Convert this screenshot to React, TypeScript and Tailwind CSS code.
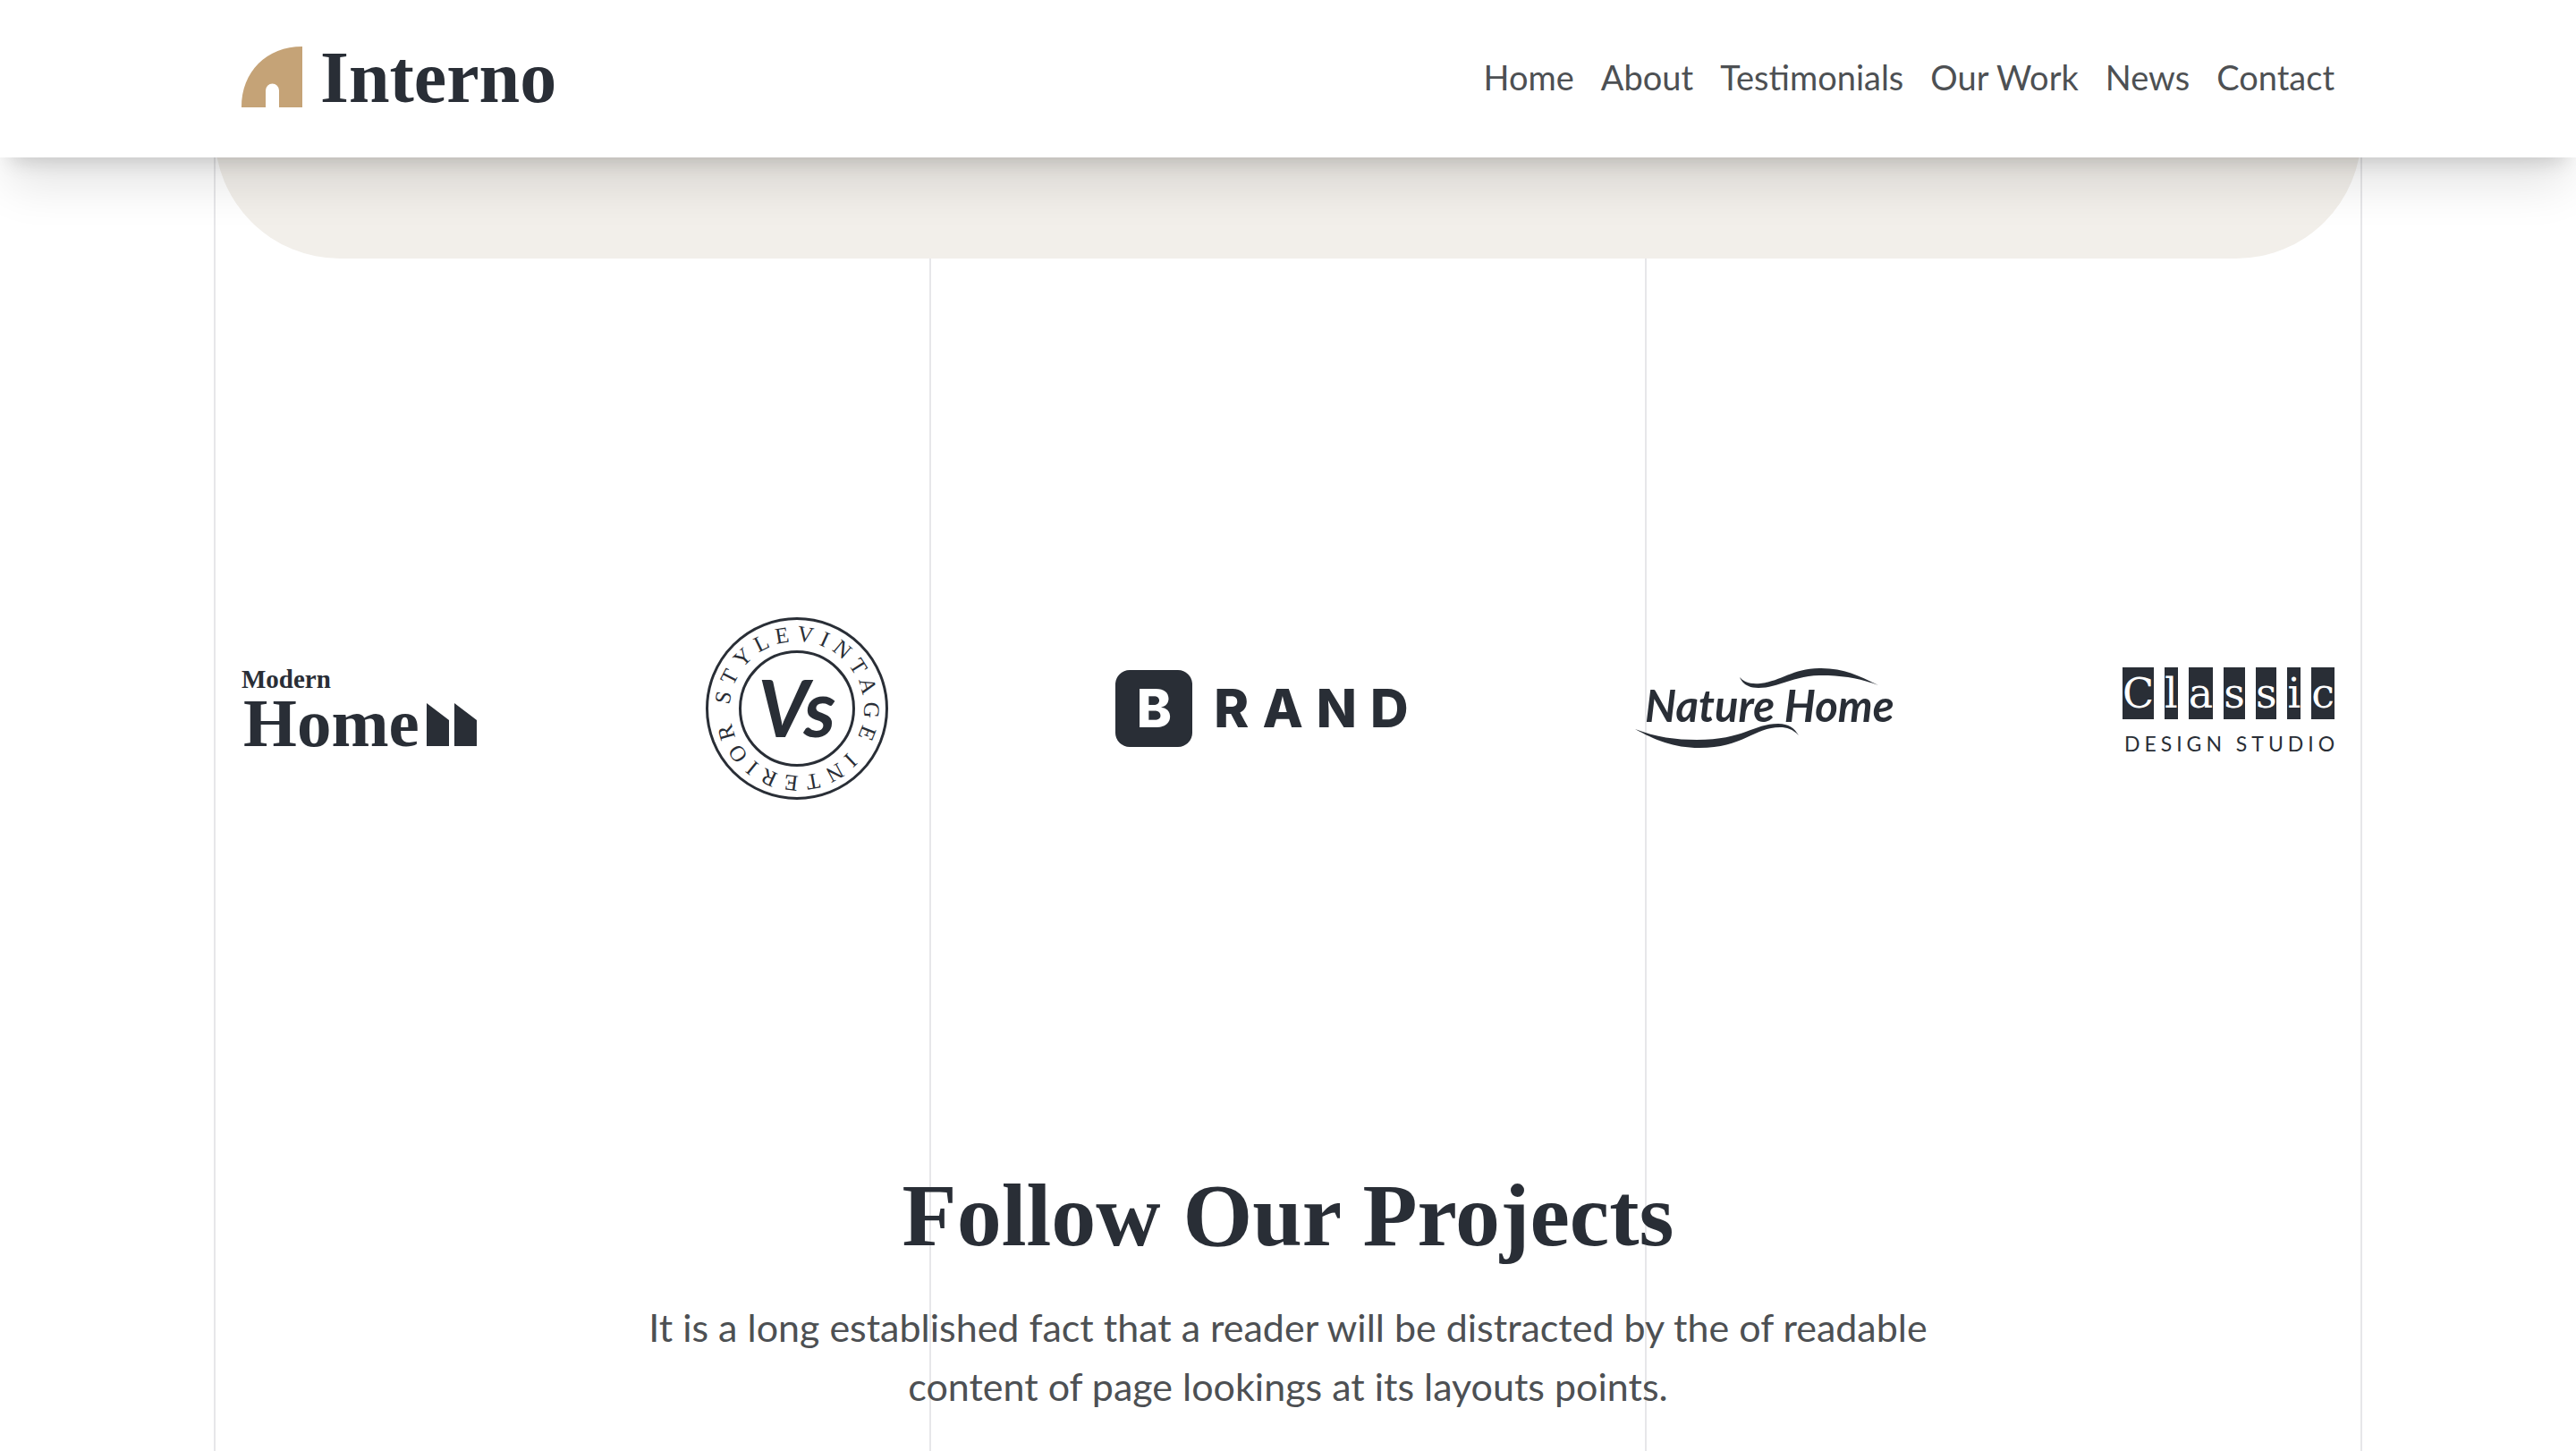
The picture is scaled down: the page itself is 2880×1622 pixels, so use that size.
import React from "react";

const navLinks = ["Home", "About", "Testimonials", "Our Work", "News", "Contact"];
const classicTiles = ["C", "l", "a", "s", "s", "i", "c"];
const dividers = [0, 1, 2, 3];

function InternoMark() {
  return (
    <svg className="size-[68px] shrink-0 fill-[#c5a377]" viewBox="0 0 68 68" aria-hidden="true">
      <path d="M68 0V68H42V49a7.5 7.5 0 0 0-15 0V68H0C0 28 28 0 68 0Z" />
    </svg>
  );
}

function Header() {
  return (
    <header className="sticky top-0 z-10 h-[176px] bg-white shadow-[0_40px_50px_-10px_rgba(0,0,0,0.11),0_16px_20px_-12px_rgba(0,0,0,0.15)]">
      <div className="mx-auto flex h-full max-w-[2400px] items-center justify-between px-[30px] pb-1">
        <a href="#" className="flex items-center gap-5">
          <InternoMark />
          <span className="pt-0.5 font-['Liberation_Serif',serif] text-[82px] leading-[92px] font-bold text-[#292e36]">
            Interno
          </span>
        </a>
        <nav>
          <ul className="flex gap-[30px]">
            {navLinks.map((label) => (
              <li key={label}>
                <a href="#" className="text-[38px] leading-[60px]">
                  {label}
                </a>
              </li>
            ))}
          </ul>
        </nav>
      </div>
    </header>
  );
}

function ModernHome() {
  return (
    <svg
      className="h-[88px] w-[264px] shrink-0 overflow-visible fill-current font-['Liberation_Serif',serif] font-bold"
      viewBox="0 0 264 88"
      role="img"
      aria-label="Modern Home"
    >
      <text x="0" y="21" className="text-[29px]">
        Modern
      </text>
      <text x="2" y="86" className="text-[77px]">
        Home
      </text>
      <path d="M207 38 232 57V86H207ZM238 38 263 57V86H238Z" />
    </svg>
  );
}

function VintageStyle() {
  return (
    <svg
      className="size-[204px] shrink-0 fill-current"
      viewBox="0 0 204 204"
      role="img"
      aria-label="Vs, Style Vintage Interior"
    >
      <circle cx="102" cy="102" r="100.5" fill="none" stroke="currentColor" strokeWidth="3" />
      <circle cx="102" cy="102" r="63.5" fill="none" stroke="currentColor" strokeWidth="3" />
      <path id="ring" d="M27 102a75 75 0 0 1 150 0a75 75 0 0 1 -150 0" fill="none" />
      <text className="font-['Liberation_Serif',serif] text-[25px] tracking-[7px]">
        <textPath href="#ring" startOffset="4">
          STYLEVINTAGE INTERIOR
        </textPath>
      </text>
      <text
        x="102"
        y="134"
        textAnchor="middle"
        className="font-['Lato',sans-serif] text-[88px] font-bold italic"
      >
        Vs
      </text>
    </svg>
  );
}

function Brand() {
  return (
    <div className="flex shrink-0 items-center gap-6 font-['Inter',sans-serif] text-[59px] leading-[86px] font-extrabold">
      <span className="flex size-[86px] items-center justify-center rounded-2xl bg-[#292e36] text-white">B</span>
      <span className="-mr-4 tracking-[15px]">RAND</span>
    </div>
  );
}

function NatureHome() {
  return (
    <svg
      className="h-[90px] w-[290px] shrink-0 fill-current"
      viewBox="0 0 290 90"
      role="img"
      aria-label="Nature Home"
    >
      <path d="M117 10C122 16 130 18 140 17C165 14 176 0 208 0C236 0 255 11 272 19C250 11 232 8 208 8C178 8 160 22 138 22C126 22 120 17 117 10Z" />
      <path d="M0 68C23 77 46 80 69 80C122 80 132 62 160 62C172 62 178 67 183 75C176 68 170 66 162 66C134 66 120 89 72 89C43 89 22 80 0 68Z" />
      <text x="11" y="60" className="font-['Lato',sans-serif] text-[49px] font-bold italic">
        Nature Home
      </text>
    </svg>
  );
}

function Classic() {
  return (
    <div className="shrink-0 pt-1">
      <div className="flex justify-between gap-3 font-['DejaVu_Serif',serif] text-[46px] leading-[58px] text-white">
        {classicTiles.map((letter, i) => (
          <span key={i} className="bg-[#292e36]">
            {letter}
          </span>
        ))}
      </div>
      <div className="mt-4 -mr-3 ml-0.5 font-['Lato',sans-serif] text-[23px] leading-[22px] tracking-[5px]">
        DESIGN STUDIO
      </div>
    </div>
  );
}

export default function App() {
  return (
    <div className="min-h-screen bg-white font-['Lato',sans-serif] text-[#4d5053]">
      <Header />
      <main className="mx-auto grid max-w-[2402px]">
        <div className="col-start-1 row-start-1 flex justify-between" aria-hidden="true">
          {dividers.map((n) => (
            <div key={n} className="w-0.5 bg-[#e7e7e9]" />
          ))}
        </div>
        <div className="col-start-1 row-start-1">
          <section className="mx-px -mt-[176px] h-[289px] rounded-b-[140px] bg-[#f2efea]" />
          <section className="flex items-center justify-between px-[31px] pt-[401px] pb-[399px] text-[#292e36]">
            <ModernHome />
            <VintageStyle />
            <Brand />
            <NatureHome />
            <Classic />
          </section>
          <section className="px-[31px] pb-10 text-center">
            <h2 className="font-['Liberation_Serif',serif] text-[100px] leading-[132px] font-bold text-[#292e36]">
              Follow Our Projects
            </h2>
            <p className="mx-auto mt-[26px] max-w-[1480px] text-[43px] leading-[66px]">
              It is a long established fact that a reader will be distracted by the of readable content of page
              lookings at its layouts points.
            </p>
          </section>
        </div>
      </main>
    </div>
  );
}
